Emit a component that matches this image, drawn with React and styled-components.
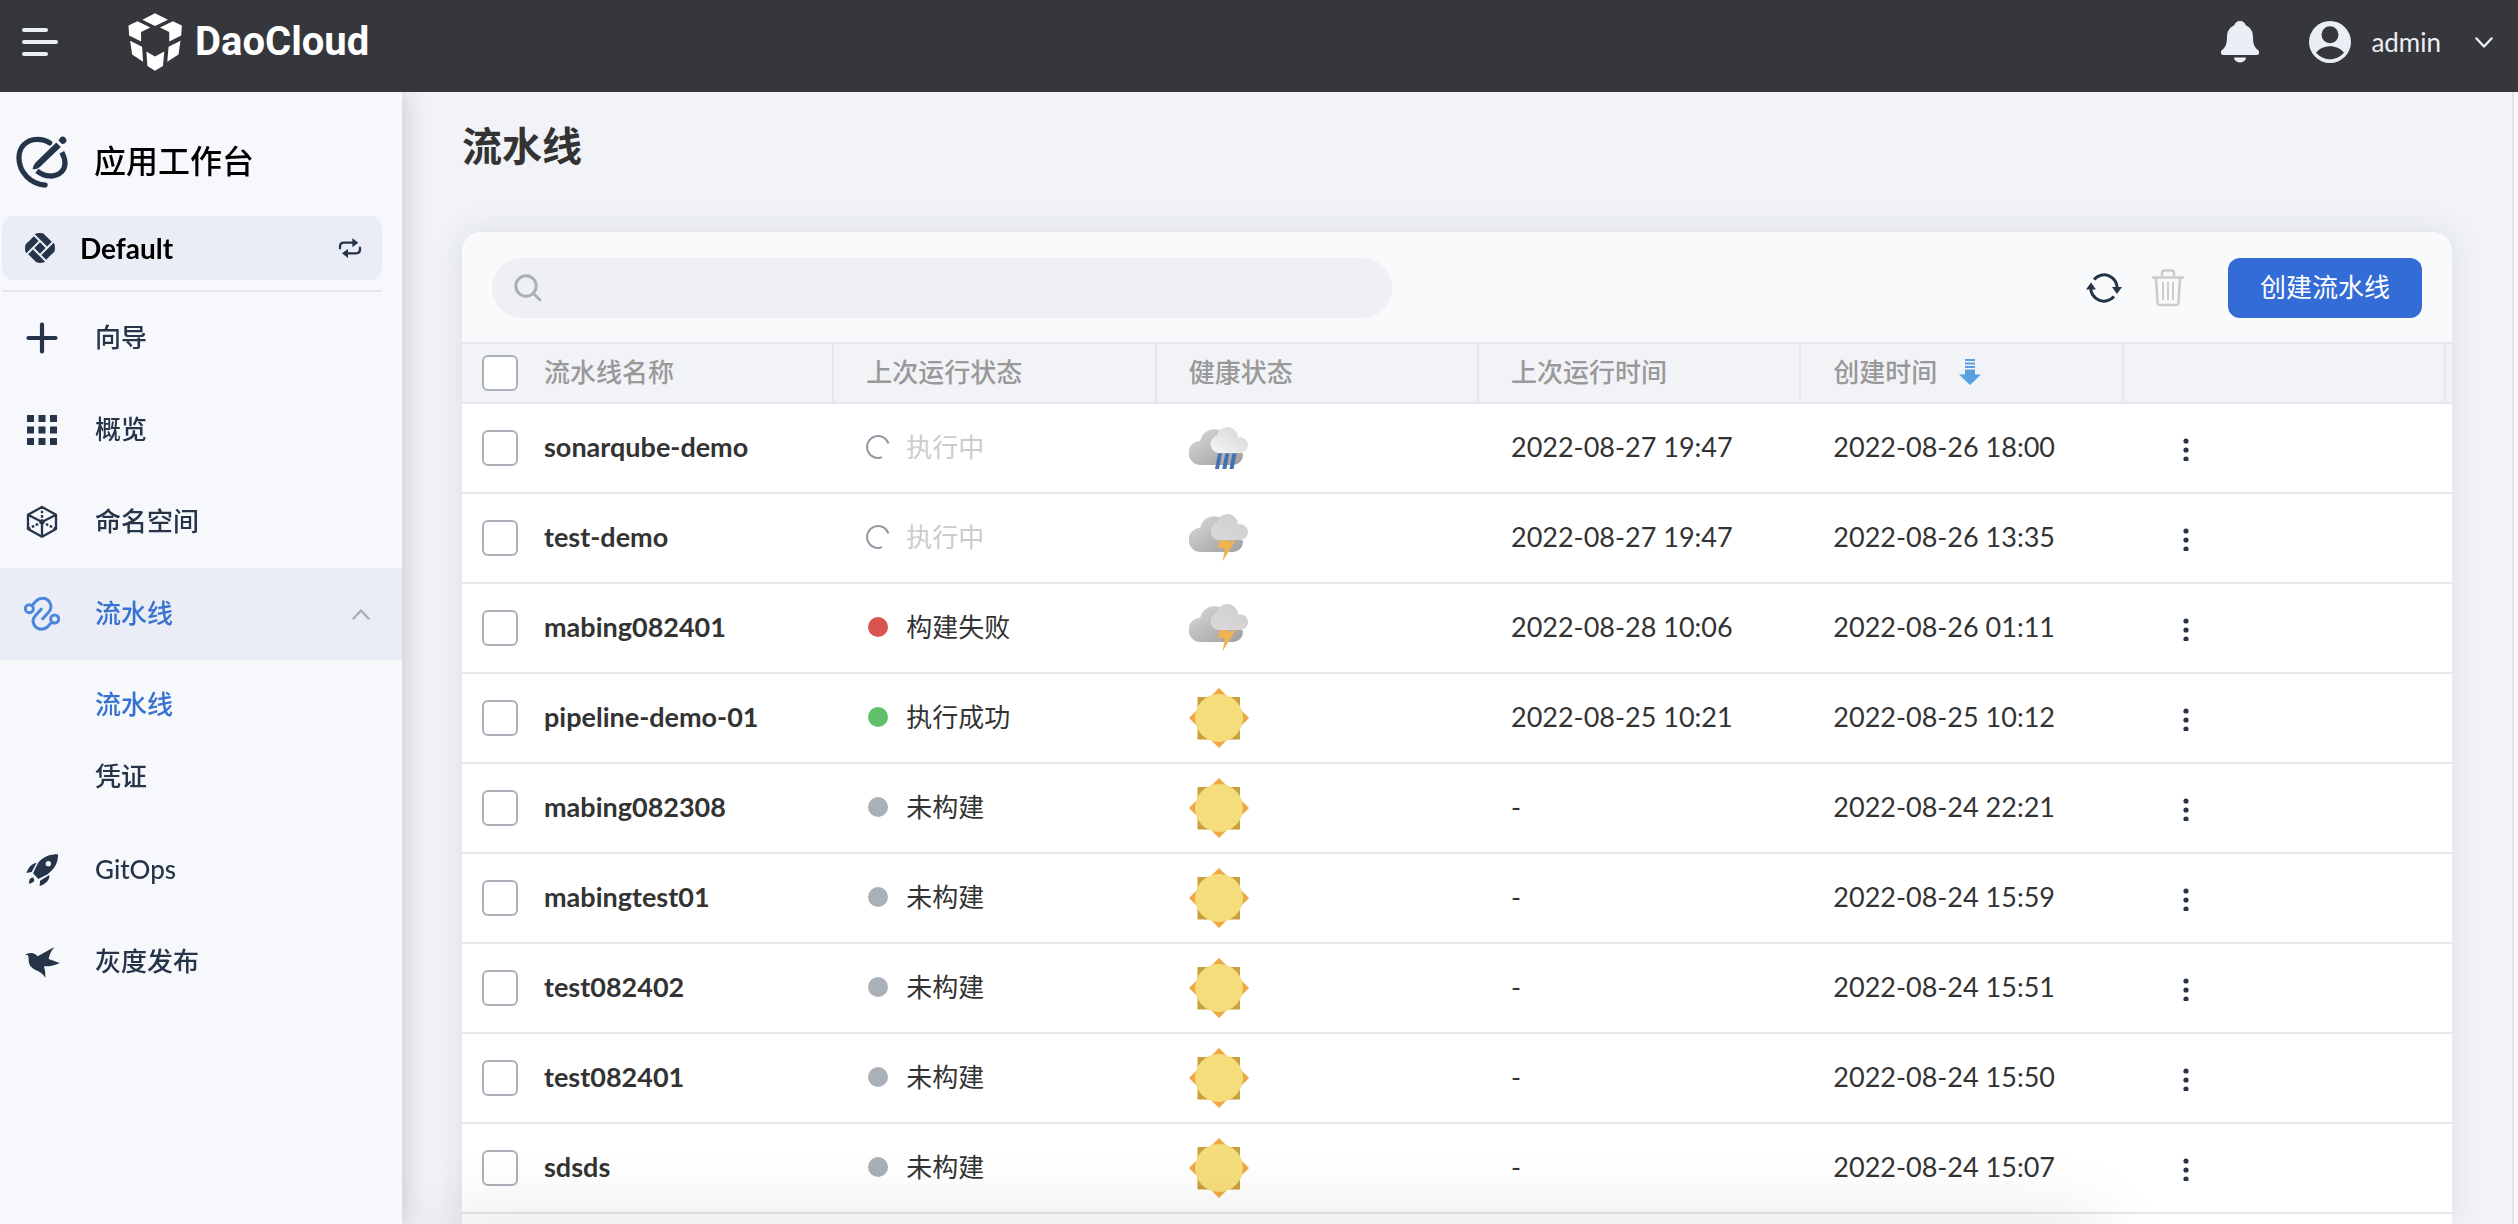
import React from "react";
import styled, { createGlobalStyle, css } from "styled-components";

const navy = "#253449";
const blue = "#3872d0";
const line = "#e6e7ec";

const GlobalStyle = createGlobalStyle`
  * { box-sizing: border-box; }
  body {
    margin: 0;
    overflow: hidden;
    background: #f1f3f7;
    color: #333;
    font-family: Lato, "Noto Sans CJK SC", sans-serif;
    font-size: 26px;
    line-height: 36px;
  }
  button { font: inherit; color: inherit; border: 0; background: none; padding: 0; cursor: pointer; }
  a { color: inherit; text-decoration: none; }
  svg { display: block; flex: none; }
`;

const Page = styled.div`
  height: 100vh;
  display: flex;
  flex-direction: column;
`;

const TopBar = styled.header`
  flex: none;
  height: 92px;
  padding: 0 25px 8px 22px;
  display: flex;
  align-items: center;
  background: #36373c;
  color: #ebeef5;
`;

const Brand = styled.a`
  display: flex;
  align-items: center;
  gap: 12px;
  margin: 0 auto 0 69px;
  color: #fff;
  font: 700 40px/48px Roboto, sans-serif;
`;

const UserButton = styled.button`
  display: flex;
  align-items: center;
  gap: 20px;
  margin-left: 50px;
  svg:last-child { margin-left: 14px; }
`;

const Body = styled.div`
  flex: 1;
  min-height: 0;
  display: flex;
`;

const Sidebar = styled.aside`
  position: relative;
  z-index: 1;
  flex: none;
  width: 402px;
  background: #f7f8fc;
  color: ${navy};
  box-shadow: 4px 0 24px rgba(0, 0, 0, 0.16);
  clip-path: inset(0 -40px 0 0);
`;

const SidebarTitle = styled.h2`
  display: flex;
  align-items: center;
  gap: 26px;
  margin: 0;
  padding: 44px 16px 28px;
  color: #000;
  font-size: 32px;
  line-height: 52px;
  font-weight: 500;
  span { padding-bottom: 2px; line-height: 48px; }
`;

const Workspace = styled.div`
  margin: 0 20px 0 2px;
  padding-bottom: 10px;
  border-bottom: 2px solid #e5e7eb;
`;

const WorkspaceButton = styled.button`
  width: 100%;
  height: 64px;
  padding: 0 20px 0 22px;
  display: flex;
  align-items: center;
  gap: 24px;
  border-radius: 12px;
  background: #eaedf5;
  color: #000;
  font-size: 28px;
  font-weight: 700;
  svg:last-child { margin-left: auto; }
`;

const MenuLink = styled.a`
  display: flex;
  align-items: center;
  gap: 35px;
  height: 92px;
  padding: 0 32px 0 24px;
  font-weight: 500;
  ${(p) => p.$active && css`background: #eaedf5; color: ${blue};`}
  span { flex: 1; padding-bottom: 2px; }
`;

const SubMenu = styled.div`
  padding: 8px 0 12px;
`;

const SubLink = styled.a`
  display: flex;
  align-items: center;
  height: 72px;
  padding-left: 95px;
  font-weight: 500;
  color: ${(p) => (p.$active ? blue : "inherit")};
`;

const Main = styled.main`
  flex: 1;
  min-width: 0;
  padding: 28px 60px 0;
  display: flex;
  flex-direction: column;
  border-right: 2px solid #e2e3e5;
`;

const Gutter = styled.div`
  flex: none;
  width: 4px;
  background: #fafafa;
`;

const PageTitle = styled.h1`
  margin: 0 0 60px;
  font-size: 40px;
  line-height: 52px;
  font-weight: 700;
`;

const Card = styled.section`
  flex: 1;
  min-height: 0;
  border-radius: 20px 20px 0 0;
  background: #fff;
  box-shadow: 0 0 32px rgba(30, 40, 70, 0.1);
`;

const Toolbar = styled.div`
  display: flex;
  align-items: center;
  height: 110px;
  padding: 26px 30px 24px;
  border-radius: 20px 20px 0 0;
  background: #f9fafc;
`;

const SearchBox = styled.label`
  flex: 0 1 900px;
  height: 60px;
  margin-right: auto;
  padding: 0 24px 0 22px;
  display: flex;
  align-items: center;
  gap: 14px;
  border-radius: 30px;
  background: #eff0f4;
  input { flex: 1; border: 0; outline: 0; background: none; font: inherit; }
`;

const IconButton = styled.button`
  display: flex;
  margin-left: 30px;
  color: ${(p) => (p.disabled ? "#cccccc" : navy)};
`;

const PrimaryButton = styled.button`
  height: 60px;
  margin-left: 44px;
  padding: 0 32px 2px;
  border-radius: 12px;
  background: #336cd6;
  color: #fff;
`;

const Table = styled.table`
  width: 100%;
  table-layout: fixed;
  border-collapse: separate;
  border-spacing: 0;
`;

const HeadRow = styled.tr`
  background: #f1f3f7;
`;

const Th = styled.th`
  height: 62px;
  padding: 0 0 2px 32px;
  text-align: left;
  font-weight: 500;
  color: #999;
  border: solid ${line};
  border-width: 2px ${(p) => (p.$open ? 0 : "2px")} 2px 0;
`;

const Td = styled.td`
  height: 90px;
  padding: 0 0 2px 32px;
  border-bottom: 2px solid ${line};
  font-size: ${(p) => (p.$latin ? "27px" : "26px")};
  font-weight: ${(p) => (p.$strong ? 700 : 400)};
`;

const CheckTh = styled(Th)`padding: 0 0 0 20px;`;
const CheckTd = styled(Td)`padding: 0 0 0 20px;`;
const IconTd = styled(Td)`padding: 0 0 0 32px;`;

const Checkbox = styled.input.attrs({ type: "checkbox" })`
  appearance: none;
  display: block;
  width: 36px;
  height: 36px;
  margin: 0;
  border: 2px solid #aab0b8;
  border-radius: 6px;
  background: #fff;
`;

const Status = styled.div`
  display: flex;
  align-items: center;
  gap: 16px;
  color: ${(p) => (p.$muted ? "#ccc" : "#333")};
`;

const Dot = styled.i`
  width: 20px;
  height: 20px;
  margin: 0 2px;
  border-radius: 50%;
  background: ${(p) => p.$color};
`;

const SortLabel = styled.button`
  display: flex;
  align-items: center;
  gap: 22px;
`;

const MoreButton = styled.button`
  display: flex;
  justify-content: center;
  width: 60px;
`;

const BottomShade = styled.div`
  position: fixed;
  z-index: 0;
  top: 100%;
  left: 440px;
  right: 420px;
  height: 100px;
  box-shadow: 0 0 80px rgba(0, 0, 0, 0.12);
`;

const MenuGlyph = () => (
  <svg width="36" height="28" viewBox="0 0 36 28" fill="currentColor">
    <rect width="26" height="4" rx="2" />
    <rect y="12" width="36" height="4" rx="2" />
    <rect y="24" width="26" height="4" rx="2" />
  </svg>
);

const LogoMark = () => (
  <svg width="56" height="58" viewBox="384 36 164 175" fill="currentColor">
    <path d="M466 37 505 56 466 75 428 56Z" />
    <path d="M386 74 413 61 452 80 424 93V122L388 104Z" />
    <path d="M547 74 520 61 481 80 509 93V122L545 104Z" />
    <path d="M391 120 427 138 430 183 397 161Z" />
    <path d="M543 120 507 138 503 183 537 161Z" />
    <path d="M440 152 466 167 494 152 490 196 466 210 443 196Z" />
  </svg>
);

const Bell = () => (
  <svg width="38" height="42" viewBox="0 0 38 42" fill="currentColor">
    <path d="M19 0c3 0 5 2 6 4.500 4.500 2 7 6 7 11 0 8 1.500 10.500 5 13.500C39 31 38 34 36 34H2c-2 0-3-3-1-5 3.500-3 5-5.500 5-13.500 0-5 2.500-9 7-11C14 2 16 0 19 0Z" />
    <path d="M13 36.500h12a6 5 0 0 1-12 0Z" />
  </svg>
);

const Avatar = () => (
  <svg width="42" height="42" viewBox="0 0 42 42">
    <circle cx="21" cy="21" r="21" fill="currentColor" />
    <circle cx="21" cy="13.700" r="8.500" fill="#36373c" />
    <path d="M7 31.500C14 23 28 23 35 31.500 28 40.500 14 40.500 7 31.500Z" fill="#36373c" />
  </svg>
);

const Chevron = ({ up, color = "currentColor" }) => (
  <svg width="18" height="11" viewBox="0 0 18 11" fill="none" stroke={color} strokeWidth="2.400" strokeLinecap="round" strokeLinejoin="round">
    <path d={up ? "M1.500 9.500 9 1.500 16.500 9.500" : "M1.500 1.500 9 9.500 16.500 1.500"} />
  </svg>
);

const WorkbenchIcon = () => (
  <svg width="52" height="52" viewBox="47 406 159 159" fill="none" stroke={navy} strokeWidth="16" strokeLinecap="round">
    <path d="M150 427C137 418 125 416 112 416 79 416 56 440 56 472 56 516 90 552 136 556" />
    <path strokeLinecap="butt" d="M187 456C201 482 199 502 186 516 167 534 134 532 111 512" />
    <path fill={navy} stroke="none" d="M170 426 184 440 120 501Q108 510 98 507 98 498 107 487Z" />
    <path fill={navy} stroke="none" d="M177 420 188 431 197 428A10 10 0 1 0 182 411Z" />
  </svg>
);

const WorkspaceIcon = () => (
  <svg width="32" height="32" viewBox="-48 -48 96 96" fill={navy}>
    <defs><clipPath id="ws"><circle r="45" /></clipPath></defs>
    <g clipPath="url(#ws)">
      <g transform="rotate(45)">
        <rect x="-12" y="-12" width="24" height="24" />
        <rect x="-40" y="-38" width="52" height="20" />
        <rect x="18" y="-40" width="20" height="52" />
        <rect x="-12" y="18" width="52" height="20" />
        <rect x="-38" y="-12" width="20" height="52" />
      </g>
    </g>
  </svg>
);

const SwapIcon = () => (
  <svg width="24" height="20" viewBox="1014 712 72 60" fill="none" stroke={navy} strokeWidth="7" strokeLinecap="round">
    <path d="M1020 743V738Q1020 726 1032 726H1060" />
    <path d="M1080 741V746Q1080 758 1068 758H1040" />
    <path fill={navy} stroke="none" d="M1057 713 1075 726 1057 740ZM1044 745 1026 758 1044 772Z" />
  </svg>
);

const PlusIcon = () => (
  <svg width="36" height="36" viewBox="0 0 36 36" stroke="currentColor" strokeWidth="4.200" strokeLinecap="round">
    <path d="M18 4.500V31.500M4.500 18H31.500" />
  </svg>
);

const GridIcon = () => (
  <svg width="36" height="36" viewBox="0 0 36 36" fill="currentColor">
    {[3, 14.500, 26].map((y) => [3, 14.500, 26].map((x) => <rect key={`${x}-${y}`} x={x} y={y} width="7" height="7" />))}
  </svg>
);

const CubeIcon = () => (
  <svg width="36" height="36" viewBox="72 673 108 108" fill="none" stroke="currentColor" strokeWidth="7" strokeLinejoin="round">
    <path d="M126 682 168 705V748L126 771 84 748V705Z" />
    <path d="M84 705 126 727 168 705M126 727V771" />
    <path strokeDasharray="8 5" d="M126 727V682M126 727 84 748M126 727 168 748" />
  </svg>
);

const PipelineIcon = () => (
  <svg width="36" height="36" viewBox="72 949 108 108" fill="none" stroke="#4c86df" strokeWidth="9" strokeLinecap="round">
    <circle cx="88" cy="987" r="12" />
    <circle cx="164" cy="1018" r="12" />
    <path d="M97 977 108 964C122 952 139 954 148 966 156 979 154 989 146 998L128 1017" />
    <path d="M155 1028 144 1040C132 1052 115 1051 105 1040 96 1027 98 1017 106 1008L124 988" />
  </svg>
);

const RocketIcon = () => (
  <svg width="36" height="36" viewBox="72 576 108 108" fill="currentColor">
    <path fillRule="evenodd" d="M174 583C148 583 129 590 114 609L99 640 115 657 143 643C164 626 175 608 174 583ZM145 603A8 8 0 1 1 145 619 8 8 0 1 1 145 603Z" />
    <path d="M110 608C94 611 86 621 79 639L95 636Z" />
    <path d="M148 645C149 661 137 672 119 678L120 662Z" />
    <path d="M89 658Q94 651 100 653 105 659 101 665 96 670 86 671Z" />
  </svg>
);

const BirdIcon = () => (
  <svg width="36" height="36" viewBox="73 852 108 108" fill="currentColor">
    <path d="M75 884Q86 878 98 879 108 881 114 889L164 861Q150 878 147 897L180 909Q158 920 133 919 138 935 137 953 127 936 106 929 86 919 87 900 88 890 84 885Z" />
  </svg>
);

const SearchIcon = () => (
  <svg width="28" height="32" viewBox="0 0 28 32" fill="none" stroke="#aab0b8" strokeWidth="3" strokeLinecap="round">
    <circle cx="12" cy="14" r="10.200" />
    <path d="M19.500 21.500 26 28" />
  </svg>
);

const RefreshIcon = () => (
  <svg width="36" height="32" viewBox="0 0 36 32" fill="none" stroke="currentColor" strokeWidth="3">
    <path d="M8 7.500A13.200 13.200 0 0 1 31.200 17" />
    <path d="M28 24.500A13.200 13.200 0 0 1 4.800 15" />
    <path fill="currentColor" stroke="none" d="M0 17.500H10L5 10.500ZM26 15H36L31 22Z" />
  </svg>
);

const TrashIcon = () => (
  <svg width="32" height="38" viewBox="0 0 32 38" fill="none" stroke="currentColor" strokeWidth="2.500" strokeLinejoin="round">
    <path d="M0 8.500H32M10 8V4Q10 1.500 12.500 1.500H19.500Q22 1.500 22 4V8" />
    <path d="M4 9 5.500 33.500Q5.700 36 8 36H24Q26.300 36 26.500 33.500L28 9" />
    <path strokeWidth="2" d="M11 13V31M16 13V31M21 13V31" />
  </svg>
);

const SortIcon = () => (
  <svg width="22" height="26" viewBox="0 0 22 26" fill="#57a0e2">
    <path d="M6 0H16V2H6ZM6 3.500H16V5.500H6ZM6 7H16V9H6ZM6 10.500H16V15.500H22L11 26 0 15.500H6Z" />
  </svg>
);

const SpinnerIcon = () => (
  <svg width="24" height="26" viewBox="0 0 24 26" fill="none" stroke="#8f98a3" strokeWidth="2">
    <path d="M22.500 9.500A11 11 0 1 0 16 23.300" />
  </svg>
);

const MoreIcon = () => (
  <svg width="6" height="26" viewBox="0 0 6 26" fill={navy}>
    <circle cx="3" cy="6" r="2.600" /><circle cx="3" cy="15" r="2.600" /><circle cx="3" cy="24" r="2.600" />
  </svg>
);

const BACK_CLOUD = "M12 36A12 12 0 0 1 11 12A14.500 14.500 0 0 1 39 10L54 25V26A10 10 0 0 1 44 36Z";
const FRONT_CLOUD = "M9 26A9 9 0 0 1 8 8.500A10.600 10.600 0 0 1 29 10.500A7.900 7.900 0 1 1 31.500 26Z";

const Weather = ({ kind }) => {
  if (kind === "sun") {
    return (
      <svg width="60" height="60" viewBox="0 0 60 60" role="img" aria-label="sun">
        <path fill="#c9a03c" d="M8.500 9H51V51.500H8.500Z" />
        <path fill="#efa742" d="M30 0 60 30 30 60 0 30Z" />
        <circle cx="30" cy="30" r="24" fill="#f6dd7b" />
      </svg>
    );
  }
  const rain = kind === "rain";
  const id = `cloud-${kind}`;
  return (
    <svg width="60" height="60" viewBox="0 0 60 60" role="img" aria-label={kind}>
      <defs>
        <linearGradient id={`${id}-back`} x1="0" y1="0" x2="1" y2="1">
          <stop offset="0.100" stopColor="#d4d4d4" />
          <stop offset="1" stopColor="#9f9d9e" />
        </linearGradient>
        <linearGradient id={`${id}-front`} x1="0" y1="1" x2="1" y2="0">
          <stop offset="0" stopColor={rain ? "#f6f6f6" : "#dbd9da"} />
          <stop offset="0.700" stopColor={rain ? "#dedede" : "#d2d0d1"} />
        </linearGradient>
      </defs>
      <g transform={rain ? "translate(0 3)" : undefined}>
        <path transform="translate(0 8)" fill={`url(#${id}-back)`} d={BACK_CLOUD} />
        <path transform="translate(20 6)" fill={`url(#${id}-front)`} d={FRONT_CLOUD} />
        {rain ? (
          <path fill="#4471b3" d="M29 32.500H33L30 48H26ZM36.300 32.500H40.300L37.300 48H33.300ZM43.500 32.500H47.500L44.500 48H40.500Z" />
        ) : (
          <path fill="#eeb454" d="M31 32H38L39.500 33.500 46.500 32.500 33.500 53.500 36 40.500 28.500 39.500Z" />
        )}
      </g>
    </svg>
  );
};

const STATES = {
  running: { text: "执行中" },
  failed: { text: "构建失败", color: "#d9534f" },
  success: { text: "执行成功", color: "#5fbf6b" },
  none: { text: "未构建", color: "#aab0b8" },
};

const PIPELINES = [
  ["sonarqube-demo", "running", "rain", "2022-08-27 19:47", "2022-08-26 18:00"],
  ["test-demo", "running", "storm", "2022-08-27 19:47", "2022-08-26 13:35"],
  ["mabing082401", "failed", "storm", "2022-08-28 10:06", "2022-08-26 01:11"],
  ["pipeline-demo-01", "success", "sun", "2022-08-25 10:21", "2022-08-25 10:12"],
  ["mabing082308", "none", "sun", "-", "2022-08-24 22:21"],
  ["mabingtest01", "none", "sun", "-", "2022-08-24 15:59"],
  ["test082402", "none", "sun", "-", "2022-08-24 15:51"],
  ["test082401", "none", "sun", "-", "2022-08-24 15:50"],
  ["sdsds", "none", "sun", "-", "2022-08-24 15:07"],
];

function PipelineRow({ name, state, health, lastRun, created }) {
  const { text, color } = STATES[state];
  return (
    <tr>
      <CheckTd><Checkbox aria-label={name} /></CheckTd>
      <Td $latin $strong>{name}</Td>
      <Td>
        <Status $muted={!color}>
          {color ? <Dot $color={color} /> : <SpinnerIcon />}
          <span>{text}</span>
        </Status>
      </Td>
      <IconTd><Weather kind={health} /></IconTd>
      <Td $latin>{lastRun}</Td>
      <Td $latin>{created}</Td>
      <IconTd><MoreButton aria-label="更多"><MoreIcon /></MoreButton></IconTd>
      <Td />
    </tr>
  );
}

export default function App() {
  return (
    <Page>
      <GlobalStyle />
      <TopBar>
        <button aria-label="菜单"><MenuGlyph /></button>
        <Brand href="#"><LogoMark />DaoCloud</Brand>
        <button aria-label="通知"><Bell /></button>
        <UserButton><Avatar />admin<Chevron /></UserButton>
      </TopBar>
      <Body>
        <Sidebar>
          <SidebarTitle><WorkbenchIcon /><span>应用工作台</span></SidebarTitle>
          <Workspace>
            <WorkspaceButton><WorkspaceIcon />Default<SwapIcon /></WorkspaceButton>
          </Workspace>
          <nav>
            <MenuLink href="#"><PlusIcon /><span>向导</span></MenuLink>
            <MenuLink href="#"><GridIcon /><span>概览</span></MenuLink>
            <MenuLink href="#"><CubeIcon /><span>命名空间</span></MenuLink>
            <MenuLink href="#" $active><PipelineIcon /><span>流水线</span><Chevron up color="#a9adb5" /></MenuLink>
            <SubMenu>
              <SubLink href="#" $active>流水线</SubLink>
              <SubLink href="#">凭证</SubLink>
            </SubMenu>
            <MenuLink href="#"><RocketIcon /><span>GitOps</span></MenuLink>
            <MenuLink href="#"><BirdIcon /><span>灰度发布</span></MenuLink>
          </nav>
        </Sidebar>
        <Main>
          <PageTitle>流水线</PageTitle>
          <Card>
            <Toolbar>
              <SearchBox><SearchIcon /><input type="text" aria-label="搜索" /></SearchBox>
              <IconButton aria-label="刷新"><RefreshIcon /></IconButton>
              <IconButton aria-label="删除" disabled><TrashIcon /></IconButton>
              <PrimaryButton>创建流水线</PrimaryButton>
            </Toolbar>
            <Table>
              <colgroup>
                <col style={{ width: 50 }} />
                <col /><col /><col /><col /><col /><col />
                <col style={{ width: 6 }} />
              </colgroup>
              <thead>
                <HeadRow>
                  <CheckTh $open><Checkbox aria-label="全选" /></CheckTh>
                  <Th>流水线名称</Th>
                  <Th>上次运行状态</Th>
                  <Th>健康状态</Th>
                  <Th>上次运行时间</Th>
                  <Th><SortLabel>创建时间<SortIcon /></SortLabel></Th>
                  <Th />
                  <Th $open />
                </HeadRow>
              </thead>
              <tbody>
                {PIPELINES.map(([name, state, health, lastRun, created]) => (
                  <PipelineRow key={name} name={name} state={state} health={health} lastRun={lastRun} created={created} />
                ))}
              </tbody>
            </Table>
          </Card>
        </Main>
        <Gutter />
      </Body>
      <BottomShade />
    </Page>
  );
}
